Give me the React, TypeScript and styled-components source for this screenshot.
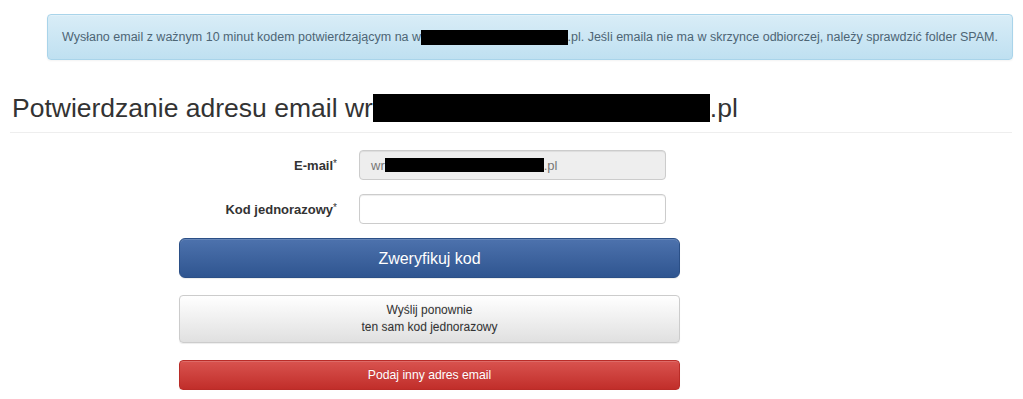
import React from "react";
import styled, { createGlobalStyle } from "styled-components";

const GlobalStyle = createGlobalStyle`
  html, body {
    margin: 0;
    padding: 0;
    background: #fff;
    font-family: "Liberation Sans", Arial, sans-serif;
    color: #333;
  }
  * {
    box-sizing: border-box;
  }
`;

const Page = styled.div`
  width: 1023px;
  padding-top: 14px;
`;

const Alert = styled.div`
  margin-left: 47px;
  width: 966px;
  height: 46px;
  padding: 0 14px;
  display: flex;
  align-items: center;
  border: 1px solid #a9d4ea;
  border-radius: 4px;
  background: linear-gradient(to bottom, #d9edf7 0%, #bfe0f1 100%);
  box-shadow: inset 0 1px 0 rgba(255, 255, 255, 0.25), 0 1px 2px rgba(0, 0, 0, 0.05);
  color: #4d6575;
  font-size: 12.5px;
  white-space: nowrap;
`;

const Redacted = styled.span<{ $w: number; $h: number }>`
  display: inline-block;
  width: ${({ $w }) => $w}px;
  height: ${({ $h }) => $h}px;
  background: #000;
  vertical-align: middle;
`;

const Heading = styled.h2`
  margin: 32px 0 0 10px;
  width: 1002px;
  padding: 0 0 8px 2px;
  border-bottom: 1px solid #eee;
  font-size: 26.5px;
  font-weight: 400;
  line-height: 32px;
  color: #333;
  white-space: nowrap;
  display: flex;
  align-items: center;
`;

const Form = styled.form`
  margin: 17px 0 0 179px;
  width: 501px;
  display: flex;
  flex-direction: column;
`;

const Row = styled.div<{ $mb: number }>`
  display: grid;
  grid-template-columns: 158px 307px;
  column-gap: 22px;
  align-items: center;
  margin-bottom: ${({ $mb }) => $mb}px;
`;

const Label = styled.label`
  text-align: right;
  font-size: 13px;
  font-weight: 700;
  color: #333;

  sup {
    font-weight: 400;
    font-size: 10px;
    vertical-align: 3px;
  }
`;

const Field = styled.div<{ $disabled?: boolean }>`
  height: 30px;
  border: 1px solid #ccc;
  border-radius: 4px;
  background: ${({ $disabled }) => ($disabled ? "#eee" : "#fff")};
  box-shadow: inset 0 1px 1px rgba(0, 0, 0, 0.075);
  padding: 0 11px;
  display: flex;
  align-items: center;
  font-size: 13px;
  color: #777;
`;

const Input = styled.input`
  height: 30px;
  width: 100%;
  border: 1px solid #ccc;
  border-radius: 4px;
  background: #fff;
  box-shadow: inset 0 1px 1px rgba(0, 0, 0, 0.075);
  padding: 0 11px;
  font-size: 13px;
  font-family: inherit;
  outline: none;
`;

type Variant = "primary" | "default" | "danger";

const variants: Record<Variant, string> = {
  primary: `
    background: linear-gradient(to bottom, #4d72ad 0%, #2f5590 100%);
    border-color: #2b4f86;
    color: #fff;
  `,
  default: `
    background: linear-gradient(to bottom, #fff 0%, #e0e0e0 100%);
    border-color: #ccc;
    color: #333;
  `,
  danger: `
    background: linear-gradient(to bottom, #d9534f 0%, #c12e2a 100%);
    border-color: #b92c28;
    color: #fff;
  `,
};

const Button = styled.button<{ $variant: Variant; $h: number; $size: number; $mt: number }>`
  width: 100%;
  height: ${({ $h }) => $h}px;
  margin-top: ${({ $mt }) => $mt}px;
  border: 1px solid;
  border-radius: ${({ $variant }) => ($variant === "primary" ? 6 : 4)}px;
  font-family: inherit;
  font-size: ${({ $size }) => $size}px;
  line-height: 17px;
  text-align: center;
  text-shadow: 0 -1px 0 rgba(0, 0, 0, 0.1);
  box-shadow: inset 0 1px 0 rgba(255, 255, 255, 0.15), 0 1px 1px rgba(0, 0, 0, 0.075);
  ${({ $variant }) => variants[$variant]}
`;

export default function App() {
  return (
    <Page>
      <GlobalStyle />
      <Alert>
        Wysłano email z ważnym 10 minut kodem potwierdzającym na w
        <Redacted $w={160} $h={15} />
        .pl. Jeśli emaila nie ma w skrzynce odbiorczej, należy sprawdzić folder SPAM.
      </Alert>
      <Heading>
        Potwierdzanie adresu email wr
        <Redacted $w={337} $h={28} />
        .pl
      </Heading>
      <Form>
        <Row $mb={14}>
          <Label>
            E-mail<sup>*</sup>
          </Label>
          <Field $disabled>
            wr
            <Redacted $w={159} $h={14} />
            .pl
          </Field>
        </Row>
        <Row $mb={0}>
          <Label>
            Kod jednorazowy<sup>*</sup>
          </Label>
          <Input type="text" />
        </Row>
        <Button type="button" $variant="primary" $h={40} $size={16} $mt={14}>
          Zweryfikuj kod
        </Button>
        <Button type="button" $variant="default" $h={48} $size={12} $mt={17}>
          Wyślij ponownie
          <br />
          ten sam kod jednorazowy
        </Button>
        <Button type="button" $variant="danger" $h={30} $size={12.2} $mt={17}>
          Podaj inny adres email
        </Button>
      </Form>
    </Page>
  );
}
